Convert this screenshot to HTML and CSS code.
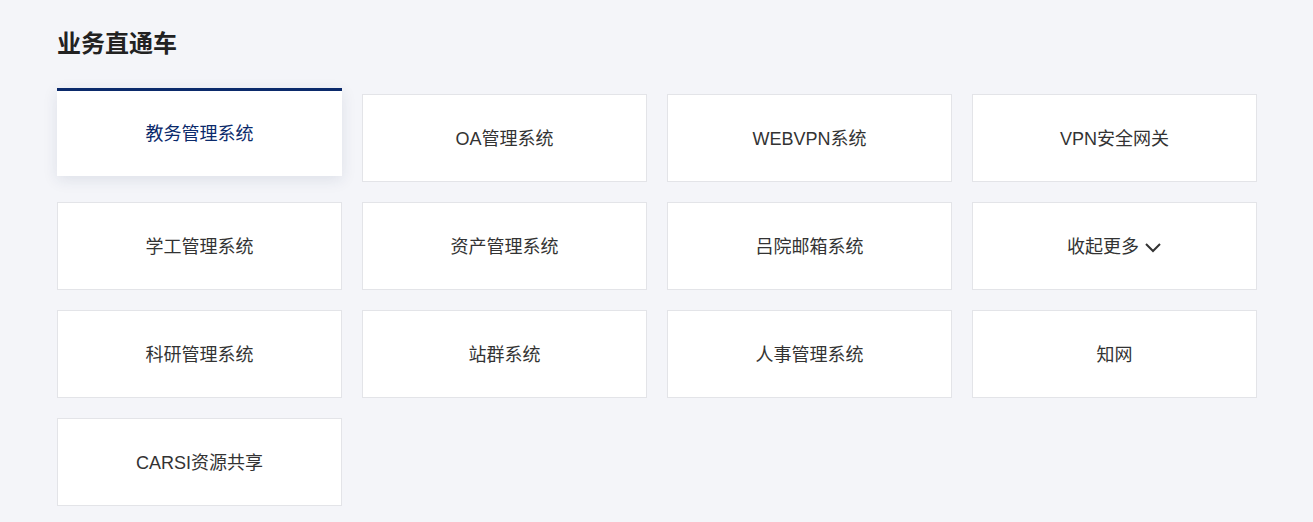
FILE: index.html
```html
<!DOCTYPE html>
<html lang="zh-CN">
<head>
    <meta charset="UTF-8">
    <title>业务直通车</title>
    <link rel="stylesheet" href="styles.css">
</head>
<body>
<div class="wrap">
    <h2 class="title">业务直通车</h2>
    <ul class="links">
        <li class="current"><a href="#">教务管理系统</a></li>
        <li><a href="#">OA管理系统</a></li>
        <li><a href="#">WEBVPN系统</a></li>
        <li><a href="#">VPN安全网关</a></li>
        <li><a href="#">学工管理系统</a></li>
        <li><a href="#">资产管理系统</a></li>
        <li><a href="#">吕院邮箱系统</a></li>
        <li><a href="#">收起更多<svg class="arrow" width="18" height="12" viewBox="0 0 18 12"><path d="M2 3 L9 10 L16 3" fill="none" stroke="#333" stroke-width="2"/></svg></a></li>
        <li><a href="#">科研管理系统</a></li>
        <li><a href="#">站群系统</a></li>
        <li><a href="#">人事管理系统</a></li>
        <li><a href="#">知网</a></li>
        <li><a href="#">CARSI资源共享</a></li>
    </ul>
</div>
</body>
</html>
```

FILE: styles.css
```css
* {
    margin: 0;
    padding: 0
}

ul {
    list-style: none
}

body {
    background-color: #f4f5f9;
    font-family: "Liberation Sans", "Noto Sans CJK SC", sans-serif;
    color: #333;
}

.wrap {
    padding: 28px 57px 0;
}

.title {
    font-size: 24px;
    line-height: 32px;
    font-weight: bold;
    color: #222;
    margin-bottom: 34px;
}

.links {
    display: grid;
    grid-template-columns: repeat(4, 285px);
    gap: 20px;
}

.links li {
    height: 88px;
    background-color: #fff;
    border: 1px solid #e3e4e8;
    box-sizing: border-box;
}

.links a {
    display: flex;
    height: 100%;
    align-items: center;
    justify-content: center;
    padding-bottom: 2px;
    box-sizing: border-box;
    font-size: 18px;
    color: #333;
    text-decoration: none;
}

.arrow {
    margin-left: 5px;
    margin-top: 3px;
}

/* 当前项 */
.links li.current {
    border: none;
    border-top: 3px solid #0b2a6b;
    transform: translateY(-6px);
    box-shadow: 0 4px 14px rgba(30, 50, 90, 0.1);
}

.links li.current a {
    color: #0b2a6b;
    padding-bottom: 3px;
}
```
